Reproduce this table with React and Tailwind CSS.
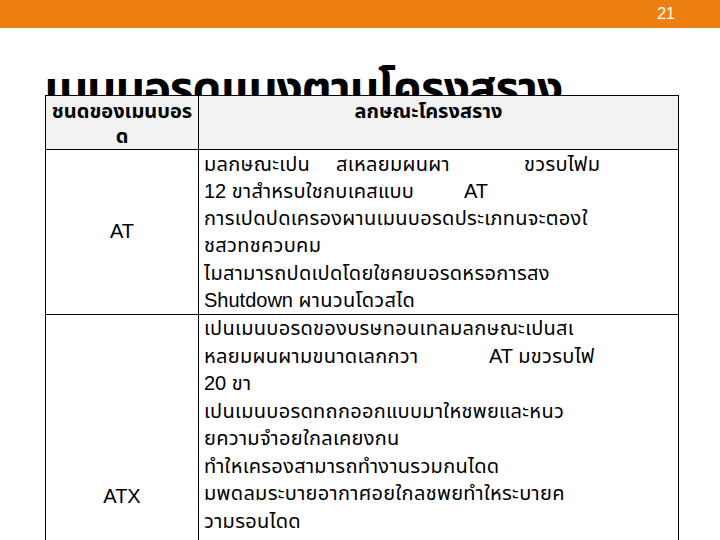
import React from "react";

const font = { fontFamily: '"Liberation Sans", "Noto Sans Thai", "DejaVu Sans", "Noto Sans", sans-serif' };

const Lat = ({ children }) => <span className="tracking-normal">{children}</span>;

const atLines = [
  <div className="flex"><span className="w-[132px] shrink-0">มลกษณะเปน</span><span className="w-[188px] shrink-0">สเหลยมผนผา</span><span>ขวรบไฟม</span></div>,
  <div><span className="inline-block w-[260px]"><Lat>12 </Lat>ขาสำหรบใชกบเคสแบบ</span><Lat>AT</Lat></div>,
  <div>การเปดปดเครองผานเมนบอรดประเภทนจะตองใ</div>,
  <div>ชสวทชควบคม</div>,
  <div>ไมสามารถปดเปดโดยใชคยบอรดหรอการสง</div>,
  <div><Lat>Shutdown </Lat>ผานวนโดวสได</div>,
];

const atxLines = [
  <div>เปนเมนบอรดของบรษทอนเทลมลกษณะเปนสเ</div>,
  <div><span className="inline-block w-[285px]">หลยมผนผามขนาดเลกกวา</span><Lat>AT </Lat>มขวรบไฟ</div>,
  <div><Lat>20 </Lat>ขา</div>,
  <div>เปนเมนบอรดทถกออกแบบมาใหชพยและหนว</div>,
  <div>ยความจำอยใกลเคยงกน</div>,
  <div>ทำใหเครองสามารถทำงานรวมกนไดด</div>,
  <div>มพดลมระบายอากาศอยใกลชพยทำใหระบายค</div>,
  <div>วามรอนไดด</div>,
];

export default function App() {
  return (
    <div className="w-[720px] h-[540px] overflow-hidden bg-white text-black" style={font}>
      <div className="h-[28px] bg-[#ee8011] flex items-center justify-end pr-[45px]">
        <span className="text-white text-[16px]">21</span>
      </div>

      <h1 className="ml-[44px] mt-[30px] h-[37px] text-[46px] leading-[60px] font-bold tracking-tight whitespace-nowrap">
        เมนบอรดแบงตามโครงสราง
      </h1>

      <div className="relative ml-[45px] w-[634px] border-[1.5px] border-black">
        <div className="flex bg-[#f2f2f2] font-bold text-[20px] leading-[25px] h-[53.5px] border-b-[1.5px] border-black">
          <div className="w-[153px] shrink-0 text-center border-r-[1.5px] border-black pt-[3px]">
            ชนดของเมนบอร<br />ด
          </div>
          <div className="flex-1 text-center pt-[3px] pr-[20px]">ลกษณะโครงสราง</div>
        </div>

        <div className="flex text-[20px] tracking-[0.3px] leading-[27.25px] border-b-[1.5px] border-black">
          <div className="w-[153px] shrink-0 flex items-center justify-center border-r-[1.5px] border-black"><Lat>AT</Lat></div>
          <div className="flex-1 px-[5px] pt-[1px]">{atLines.map((l, i) => <React.Fragment key={i}>{l}</React.Fragment>)}</div>
        </div>

        <div className="flex text-[20px] tracking-[0.3px] leading-[27.5px] min-h-[364px]">
          <div className="w-[153px] shrink-0 flex items-center justify-center border-r-[1.5px] border-black"><Lat>ATX</Lat></div>
          <div className="flex-1 px-[5px]">{atxLines.map((l, i) => <React.Fragment key={i}>{l}</React.Fragment>)}</div>
        </div>
      </div>
    </div>
  );
}
